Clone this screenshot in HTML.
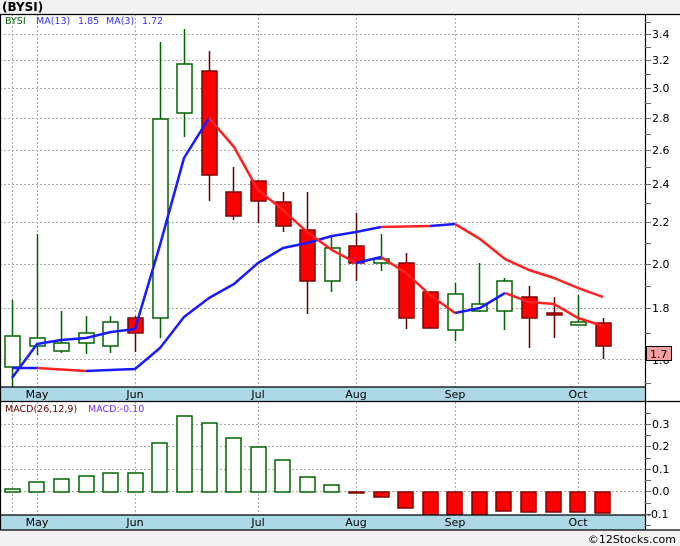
<!DOCTYPE html>
<html><head><meta charset="utf-8"><style>
html,body{margin:0;padding:0;background:#fff;width:680px;height:546px;overflow:hidden}
svg{display:block;font-family:"DejaVu Sans","Liberation Sans",sans-serif}
</style></head><body>
<svg width="680" height="546" viewBox="0 0 680 546" xmlns="http://www.w3.org/2000/svg">
<rect x="0" y="0" width="680" height="546" fill="#fff"/>
<rect x="0" y="0" width="680" height="14" fill="#f2f2f2"/>
<rect x="0" y="530" width="680" height="16" fill="#f2f2f2"/>
<text x="2" y="11" font-size="12" font-weight="bold" fill="#000">(BYSI)</text>
<text x="676" y="543" font-size="11" text-anchor="end" fill="#000">©12Stocks.com</text>
<!-- grids main -->
<g stroke="#aaa" stroke-dasharray="2,2" stroke-width="1">
<line x1="0" y1="34.5" x2="645" y2="34.5"/><line x1="0" y1="60.5" x2="645" y2="60.5"/><line x1="0" y1="88.5" x2="645" y2="88.5"/><line x1="0" y1="118.5" x2="645" y2="118.5"/><line x1="0" y1="150.5" x2="645" y2="150.5"/><line x1="0" y1="184.5" x2="645" y2="184.5"/><line x1="0" y1="222.5" x2="645" y2="222.5"/><line x1="0" y1="264.5" x2="645" y2="264.5"/><line x1="0" y1="308.5" x2="645" y2="308.5"/><line x1="0" y1="359.5" x2="645" y2="359.5"/>
<line x1="12.5" y1="14" x2="12.5" y2="387"/><line x1="37.5" y1="14" x2="37.5" y2="387"/><line x1="135.5" y1="14" x2="135.5" y2="387"/><line x1="258.5" y1="14" x2="258.5" y2="387"/><line x1="356.5" y1="14" x2="356.5" y2="387"/><line x1="455.5" y1="14" x2="455.5" y2="387"/><line x1="578.5" y1="14" x2="578.5" y2="387"/>
<line x1="0" y1="424.5" x2="645" y2="424.5"/><line x1="0" y1="446.5" x2="645" y2="446.5"/><line x1="0" y1="469.5" x2="645" y2="469.5"/><line x1="0" y1="491.5" x2="645" y2="491.5"/>
<line x1="12.5" y1="402" x2="12.5" y2="515"/><line x1="37.5" y1="402" x2="37.5" y2="515"/><line x1="135.5" y1="402" x2="135.5" y2="515"/><line x1="258.5" y1="402" x2="258.5" y2="515"/><line x1="356.5" y1="402" x2="356.5" y2="515"/><line x1="455.5" y1="402" x2="455.5" y2="515"/><line x1="578.5" y1="402" x2="578.5" y2="515"/>
</g>
<!-- wicks -->
<g stroke-width="1.5">
<g stroke="#006400">
<line x1="12.5" y1="300" x2="12.5" y2="387"/><line x1="37.5" y1="234" x2="37.5" y2="355"/><line x1="61.5" y1="311" x2="61.5" y2="353"/><line x1="86.5" y1="316" x2="86.5" y2="354"/><line x1="110.5" y1="316" x2="110.5" y2="353"/>
<line x1="160.5" y1="42" x2="160.5" y2="338"/><line x1="184.5" y1="29" x2="184.5" y2="137"/><line x1="331.5" y1="236" x2="331.5" y2="292"/><line x1="381.5" y1="234" x2="381.5" y2="271"/><line x1="455.5" y1="283" x2="455.5" y2="341"/><line x1="479.5" y1="263" x2="479.5" y2="312"/><line x1="504.5" y1="278" x2="504.5" y2="330"/><line x1="578.5" y1="295" x2="578.5" y2="325"/>
</g>
<g stroke="#600">
<line x1="135.5" y1="316" x2="135.5" y2="352"/><line x1="209.5" y1="51" x2="209.5" y2="201"/><line x1="233.5" y1="167" x2="233.5" y2="220"/><line x1="258.5" y1="181" x2="258.5" y2="223"/><line x1="283.5" y1="192" x2="283.5" y2="232"/><line x1="307.5" y1="192" x2="307.5" y2="314"/><line x1="356.5" y1="213" x2="356.5" y2="281"/><line x1="406.5" y1="253" x2="406.5" y2="329"/><line x1="430.5" y1="292" x2="430.5" y2="328"/><line x1="529.5" y1="286" x2="529.5" y2="348"/><line x1="554.5" y1="297" x2="554.5" y2="338"/><line x1="603.5" y1="318" x2="603.5" y2="359"/>
</g></g>
<!-- bodies -->
<g fill="#fff" stroke="#006400" stroke-width="1.5">
<rect x="5" y="336" width="15" height="31"/><rect x="30" y="338" width="15" height="8"/><rect x="54" y="343" width="15" height="8"/><rect x="79" y="333" width="15" height="10"/><rect x="103" y="322" width="15" height="24"/>
<rect x="153" y="119" width="15" height="199"/><rect x="177" y="64" width="15" height="49"/><rect x="325" y="248" width="15" height="33"/><rect x="374" y="259" width="15" height="4"/><rect x="448" y="294" width="15" height="36"/><rect x="472" y="304" width="15" height="7"/><rect x="497" y="281" width="15" height="30"/><rect x="571" y="322" width="15" height="3"/>
</g>
<g fill="#f00" stroke="#800000" stroke-width="1.5">
<rect x="128" y="318" width="15" height="15"/><rect x="202" y="71" width="15" height="104"/><rect x="226" y="192" width="15" height="24"/><rect x="251" y="181" width="15" height="20"/><rect x="276" y="202" width="15" height="24"/><rect x="300" y="230" width="15" height="51"/><rect x="349" y="246" width="15" height="17"/><rect x="399" y="263" width="15" height="55"/><rect x="423" y="292" width="15" height="36"/><rect x="522" y="297" width="15" height="21"/><rect x="547" y="313" width="15" height="2"/><rect x="596" y="323" width="15" height="23"/>
</g>
<!-- MA lines -->
<g fill="none" stroke-width="2.5" stroke-linejoin="round">
<polyline stroke="#1a1aff" points="12,368 37,368"/>
<polyline stroke="#ff2020" points="37,368 86,371"/>
<polyline stroke="#1a1aff" points="86,371 135,369 160,348 184,317 209,298 234,284 258,263 283,248 307,243 332,236 356,232 381,227"/>
<polyline stroke="#ff2020" points="381,227 430,226"/>
<polyline stroke="#1a1aff" points="430,226 455,224"/>
<polyline stroke="#ff2020" points="455,224 480,239 505,259 529,270 554,278 578,288 603,297"/>
<polyline stroke="#1a1aff" points="12,378 37,344 61,340 86,338 111,332 135,329 160,245 184,158 209,118"/>
<polyline stroke="#ff2020" points="209,118 234,147 258,190 283,210 307,232 332,250 356,263"/>
<polyline stroke="#1a1aff" points="356,263 381,257"/>
<polyline stroke="#ff2020" points="381,257 406,273 430,295 455,313"/>
<polyline stroke="#1a1aff" points="455,313 480,308 505,293"/>
<polyline stroke="#ff2020" points="505,293 529,302 554,304 578,318 603,326"/>
</g>
<!-- MACD bars -->
<g fill="#fff" stroke="#006400" stroke-width="1.5">
<rect x="5" y="489" width="15" height="3"/><rect x="29" y="482" width="15" height="10"/><rect x="54" y="479" width="15" height="13"/><rect x="79" y="476" width="15" height="16"/><rect x="103" y="473" width="15" height="19"/><rect x="128" y="473" width="15" height="19"/><rect x="152" y="443" width="15" height="49"/><rect x="177" y="416" width="15" height="76"/><rect x="202" y="423" width="15" height="69"/><rect x="226" y="438" width="15" height="54"/><rect x="251" y="447" width="15" height="45"/><rect x="275" y="460" width="15" height="32"/><rect x="300" y="477" width="15" height="15"/><rect x="324" y="485" width="15" height="7"/>
</g>
<g fill="#f00" stroke="#800000" stroke-width="1.5">
<rect x="349" y="492" width="15" height="1"/><rect x="374" y="492" width="15" height="5"/><rect x="398" y="492" width="15" height="16"/><rect x="423" y="492" width="15" height="23"/><rect x="447" y="492" width="15" height="23"/><rect x="472" y="492" width="15" height="23"/><rect x="496" y="492" width="15" height="19"/><rect x="521" y="492" width="15" height="20"/><rect x="546" y="492" width="15" height="20"/><rect x="570" y="492" width="15" height="20"/><rect x="595" y="492" width="15" height="21"/>
</g>
<!-- date strips -->
<rect x="0" y="387" width="645" height="14" fill="#add8e6"/>
<rect x="0" y="515" width="645" height="15" fill="#add8e6"/>
<g stroke="#000" stroke-width="1.2" fill="none">
<line x1="0" y1="14.5" x2="680" y2="14.5"/>
<line x1="0.5" y1="14" x2="0.5" y2="530"/>
<line x1="645.5" y1="14" x2="645.5" y2="530"/>
<line x1="0" y1="387" x2="645" y2="387"/>
<line x1="0" y1="401.5" x2="680" y2="401.5"/>
<line x1="0" y1="515" x2="645" y2="515"/>
<line x1="0" y1="530" x2="680" y2="530"/>
</g>
<g font-size="11" fill="#000" text-anchor="middle">
<text x="37" y="398">May</text><text x="135" y="398">Jun</text><text x="258" y="398">Jul</text><text x="356" y="398">Aug</text><text x="455" y="398">Sep</text><text x="578" y="398">Oct</text>
<text x="37" y="526">May</text><text x="135" y="526">Jun</text><text x="258" y="526">Jul</text><text x="356" y="526">Aug</text><text x="455" y="526">Sep</text><text x="578" y="526">Oct</text>
</g>
<!-- right axis -->
<g stroke="#666" stroke-width="1">
<line x1="645" y1="22.5" x2="651" y2="22.5"/><line x1="645" y1="47.5" x2="651" y2="47.5"/><line x1="645" y1="74.5" x2="651" y2="74.5"/><line x1="645" y1="103.5" x2="651" y2="103.5"/><line x1="645" y1="134.5" x2="651" y2="134.5"/><line x1="645" y1="167.5" x2="651" y2="167.5"/><line x1="645" y1="203.5" x2="651" y2="203.5"/><line x1="645" y1="243.5" x2="651" y2="243.5"/><line x1="645" y1="286.5" x2="651" y2="286.5"/><line x1="645" y1="333.5" x2="651" y2="333.5"/><line x1="645" y1="383.5" x2="651" y2="383.5"/>
<line x1="645" y1="34.5" x2="651" y2="34.5"/><line x1="645" y1="60.5" x2="651" y2="60.5"/><line x1="645" y1="88.5" x2="651" y2="88.5"/><line x1="645" y1="118.5" x2="651" y2="118.5"/><line x1="645" y1="150.5" x2="651" y2="150.5"/><line x1="645" y1="184.5" x2="651" y2="184.5"/><line x1="645" y1="222.5" x2="651" y2="222.5"/><line x1="645" y1="264.5" x2="651" y2="264.5"/><line x1="645" y1="308.5" x2="651" y2="308.5"/>
<line x1="645" y1="413.5" x2="651" y2="413.5"/><line x1="645" y1="424.5" x2="651" y2="424.5"/><line x1="645" y1="435.5" x2="651" y2="435.5"/><line x1="645" y1="446.5" x2="651" y2="446.5"/><line x1="645" y1="458.5" x2="651" y2="458.5"/><line x1="645" y1="469.5" x2="651" y2="469.5"/><line x1="645" y1="480.5" x2="651" y2="480.5"/><line x1="645" y1="491.5" x2="651" y2="491.5"/><line x1="645" y1="503.5" x2="651" y2="503.5"/><line x1="645" y1="514.5" x2="651" y2="514.5"/><line x1="645" y1="525.5" x2="651" y2="525.5"/>
</g>
<g font-size="11" fill="#000">
<text x="652" y="38">3.4</text><text x="652" y="64">3.2</text><text x="652" y="92">3.0</text><text x="652" y="122">2.8</text><text x="652" y="154">2.6</text><text x="652" y="188">2.4</text><text x="652" y="226">2.2</text><text x="652" y="268">2.0</text><text x="652" y="312">1.8</text><text x="652" y="364">1.6</text>
<text x="652" y="428">0.3</text><text x="652" y="450">0.2</text><text x="652" y="473">0.1</text><text x="652" y="495">0.0</text><text x="647" y="518">-0.1</text>
</g>
<rect x="646.5" y="346.5" width="25" height="14" fill="#f4a0a0" stroke="#000" stroke-width="1"/>
<text x="650" y="358" font-size="11" fill="#000">1.7</text>
<!-- legends -->
<g font-size="9.5">
<text x="5" y="24" fill="#006400">BYSI</text>
<text x="36" y="24" fill="#3030ff">MA(13)</text><text x="78" y="24" fill="#3030ff">1.85</text>
<text x="106" y="24" fill="#3030ff">MA(3)</text><text x="142" y="24" fill="#3030ff">1.72</text>
<text x="5" y="412" fill="#600">MACD(26,12,9)</text>
<text x="88" y="412" fill="#7a2cff">MACD:-0.10</text>
</g>
</svg>
</body></html>
